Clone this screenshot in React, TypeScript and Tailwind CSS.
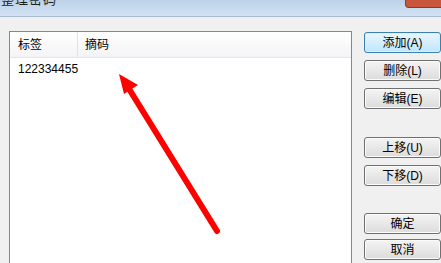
import React from "react";

const font = { fontFamily: '"Liberation Sans", "Noto Sans CJK SC", sans-serif' };

type BtnProps = { label: string; primary?: boolean; className?: string };

const WinButton = ({ label, primary, className = "" }: BtnProps) => (
  <div
    className={`flex h-[21px] w-[77px] items-center justify-center rounded-[3px] border text-[12px] leading-none text-black ${
      primary
        ? "border-[#3c7fb1] bg-gradient-to-b from-[#eaf6fd] to-[#bee6fd] shadow-[inset_0_0_0_1px_#d8f0fb]"
        : "border-[#707070] bg-gradient-to-b from-[#f4f4f4] to-[#dcdcdc] shadow-[inset_0_0_0_1px_#fbfbfb]"
    } ${className}`}
  >
    {label}
  </div>
);

export default function App() {
  return (
    <div className="relative h-[263px] w-[441px] overflow-hidden bg-[#f0f0f0]" style={font}>
      {/* title bar */}
      <div className="flex h-[17px] items-start justify-between border-b border-[#a7bad0] bg-gradient-to-b from-[#bcd2ea] to-[#d3e2f3]">
        <div className="-mt-[7px] pl-[1px] text-[13px] leading-[14px] tracking-[1px] text-[#1e1e1e]">整理密码</div>
        <div className="-mr-[6px] h-[8px] w-[42px] rounded-b-[4px] border border-t-0 border-[#8a3a2c] bg-[#c9553d]" />
      </div>

      <div className="flex pl-[9px] pt-[14px]">
        {/* list view */}
        <div className="h-[240px] w-[343px] border border-[#828790] bg-white">
          <div className="flex h-[26px] border-b border-[#e5e5e5] bg-gradient-to-b from-white to-[#f3f4f6] text-[12px] text-black">
            <div className="flex w-[68px] items-center border-r border-[#dfe2e6] pl-[8px]">标签</div>
            <div className="flex items-center pl-[7px]">摘码</div>
          </div>
          <div className="flex h-[21px] items-center pl-[8px] text-[12px] text-black">122334455</div>
        </div>

        {/* buttons */}
        <div className="ml-[12px] flex flex-col pt-[1px]">
          <WinButton label="添加(A)" primary />
          <WinButton label="删除(L)" className="mt-[7px]" />
          <WinButton label="编辑(E)" className="mt-[7px]" />
          <WinButton label="上移(U)" className="mt-[28px]" />
          <WinButton label="下移(D)" className="mt-[7px]" />
          <WinButton label="确定" className="mt-[27px]" />
          <WinButton label="取消" className="mt-[5px]" />
        </div>
      </div>

      {/* red annotation arrow */}
      <svg className="pointer-events-none absolute left-0 top-0" width="441" height="263" viewBox="0 0 441 263">
        <line x1="217" y1="231" x2="126" y2="84" stroke="#ff0000" strokeWidth="6" strokeLinecap="round" />
        <polygon points="119,74 138,85 124,94" fill="#ff0000" />
      </svg>
    </div>
  );
}
